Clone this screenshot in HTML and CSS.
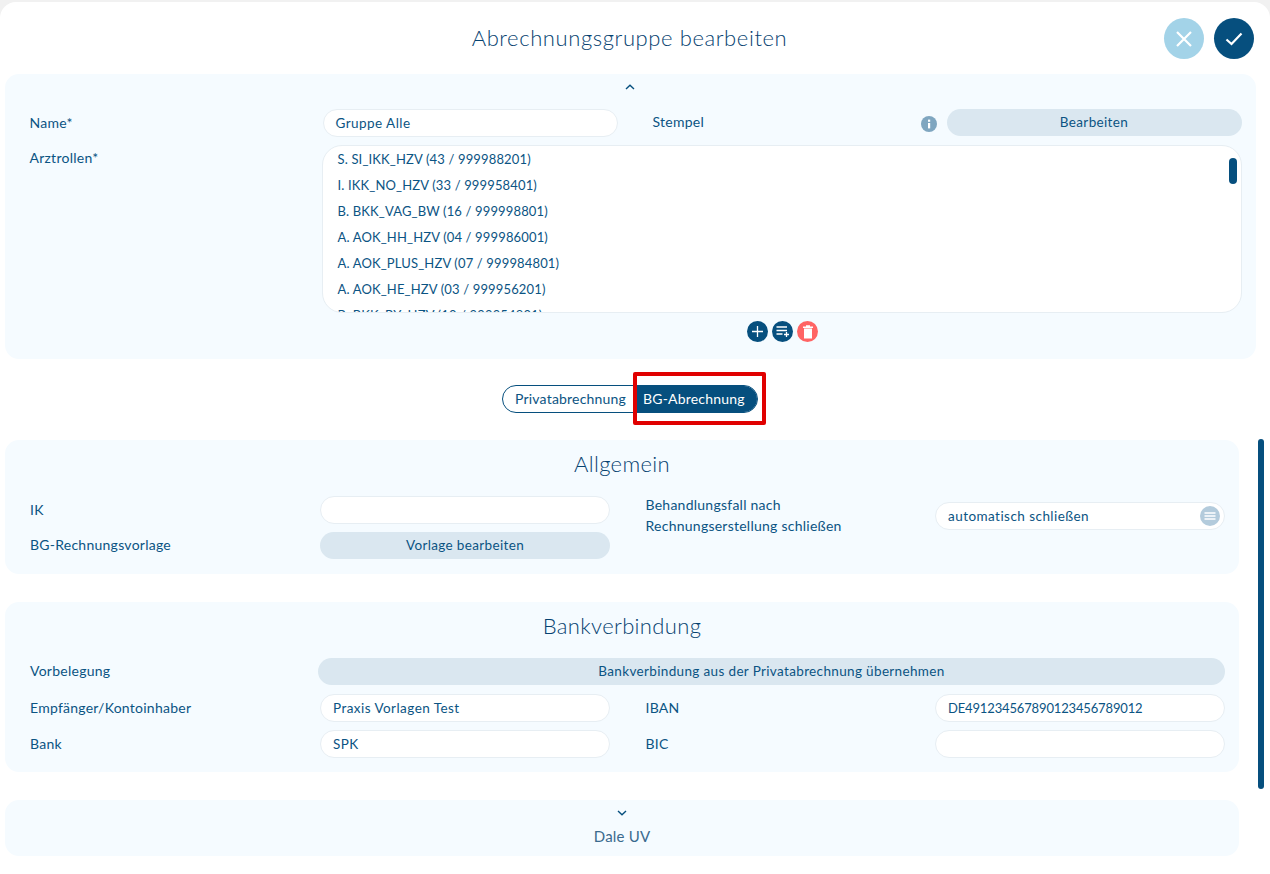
FILE: index.html
```html
<!DOCTYPE html>
<html lang="de">
<head>
<meta charset="utf-8">
<title>Abrechnungsgruppe bearbeiten</title>
<link rel="stylesheet" href="styles.css">
</head>
<body>
<div class="dialog">
  <header class="head">
    <h1 class="title">Abrechnungsgruppe bearbeiten</h1>
    <div class="head-actions">
      <button class="round cancel"><svg width="18" height="18" viewBox="0 0 18 18"><path d="M2 2L16 16M16 2L2 16" stroke="#fff" stroke-width="2.2" fill="none"/></svg></button>
      <button class="round ok"><svg width="18" height="14" viewBox="0 0 18 14"><path d="M1.5 7.5L6.5 12L16.5 1.5" stroke="#fff" stroke-width="2.2" fill="none"/></svg></button>
    </div>
  </header>

  <section class="card top-card">
    <div class="chev-row"><svg width="10" height="6" viewBox="0 0 10 6"><path d="M1 5L5 1.2L9 5" stroke="#064f7e" stroke-width="1.4" fill="none"/></svg></div>
    <div class="name-row">
      <label class="lbl name-lbl">Name*</label>
      <div class="field name-field">Gruppe Alle</div>
      <label class="lbl stempel">Stempel</label>
      <svg class="info" width="16" height="16" viewBox="0 0 16 16"><circle cx="8" cy="8" r="8" fill="#7fa6c0"/><rect x="7" y="7" width="2.2" height="5.4" fill="#fff"/><rect x="7" y="3.6" width="2.2" height="2.2" fill="#fff"/></svg>
      <button class="pill stempel-btn">Bearbeiten</button>
    </div>
    <div class="roles-row">
      <label class="lbl roles-lbl">Arztrollen*</label>
      <div class="listbox">
        <div class="opt">S. SI_IKK_HZV (43 / 999988201)</div>
        <div class="opt">I. IKK_NO_HZV (33 / 999958401)</div>
        <div class="opt">B. BKK_VAG_BW (16 / 999998801)</div>
        <div class="opt">A. AOK_HH_HZV (04 / 999986001)</div>
        <div class="opt">A. AOK_PLUS_HZV (07 / 999984801)</div>
        <div class="opt">A. AOK_HE_HZV (03 / 999956201)</div>
        <div class="opt">B. BKK_BY_HZV (10 / 999954801)</div>
        <div class="list-thumb"></div>
      </div>
    </div>
    <div class="tools">
      <span class="tool navy"><svg width="11" height="11" viewBox="0 0 11 11"><path d="M5.5 0V11M0 5.5H11" stroke="#fff" stroke-width="1.3"/></svg></span>
      <span class="tool navy"><svg width="14" height="11" viewBox="0 0 14 11"><path d="M0.5 1H11M0.5 4.5H11M0.5 8H6.5M10.5 6V11M8 8.5H13" stroke="#fff" stroke-width="1.3" fill="none"/></svg></span>
      <span class="tool red"><svg width="10" height="14" viewBox="0 0 10 14"><path d="M0 1.6H10V3H0ZM3 0.3H7V1.6H3ZM1 3.6H9V13.6H1Z" fill="#fff"/></svg></span>
    </div>
  </section>

  <div class="toggle-row">
    <div class="toggle">
      <span class="seg">Privatabrechnung</span>
      <span class="seg active">BG-Abrechnung</span>
    </div>
    <div class="highlight"></div>
  </div>

  <div class="scroll">
    <section class="card sec sec-general">
      <h2 class="sec-title">Allgemein</h2>
      <div class="general-grid">
        <label class="lbl ik-lbl">IK</label>
        <div class="field ik-field"></div>
        <label class="lbl two-line">Behandlungsfall nach<br>Rechnungserstellung schließen</label>
        <div class="field select">automatisch schließen
          <svg class="menu-ic" width="20" height="20" viewBox="0 0 20 20"><circle cx="10" cy="10" r="10" fill="#b3cbdc"/><path d="M4.5 7H15.5M4.5 10H15.5M4.5 13H15.5" stroke="#fff" stroke-width="1.4"/></svg>
        </div>
        <label class="lbl up1">BG-Rechnungsvorlage</label>
        <button class="pill">Vorlage bearbeiten</button>
      </div>
    </section>

    <section class="card sec sec-bank">
      <h2 class="sec-title">Bankverbindung</h2>
      <div class="bank-grid">
        <label class="lbl up2">Vorbelegung</label>
        <button class="pill wide">Bankverbindung aus der Privatabrechnung übernehmen</button>
        <label class="lbl">Empfänger/Kontoinhaber</label>
        <div class="field">Praxis Vorlagen Test</div>
        <label class="lbl col3">IBAN</label>
        <div class="field iban">DE491234567890123456789012</div>
        <label class="lbl">Bank</label>
        <div class="field">SPK</div>
        <label class="lbl col3">BIC</label>
        <div class="field"></div>
      </div>
    </section>

    <section class="card sec sec-dale">
      <svg width="10" height="6" viewBox="0 0 10 6"><path d="M1 1L5 4.8L9 1" stroke="#064f7e" stroke-width="1.4" fill="none"/></svg>
      <div class="dale">Dale UV</div>
    </section>

    <div class="scroll-thumb"></div>
  </div>
</div>
</body>
</html>
```

FILE: styles.css
```css
* { box-sizing: border-box; }
html, body { margin: 0; height: 874px; overflow: hidden; }
body {
  background: #f1f1f1;
  font-family: "Lato", "Open Sans", sans-serif;
  color: #0b5483;
  font-size: 14px;
}
.dialog {
  margin-top: 2px;
  height: 872px;
  background: #fff;
  border-radius: 16px 16px 0 0;
  display: flex;
  flex-direction: column;
}
.head {
  height: 72px;
  position: relative;
  display: flex;
  justify-content: center;
  padding-top: 22px;
  padding-right: 11px;
}
.title { margin: 0; font-weight: 300; font-size: 22px; line-height: 28px; letter-spacing: 0.6px; color: #064270; }
.head-actions { position: absolute; top: 16px; left: 1164px; display: flex; gap: 10px; }
.round {
  width: 40px; height: 41px; border-radius: 50%; border: 0; padding: 0;
  display: flex; align-items: center; justify-content: center;
}
.cancel { background: #a3d3e8; }
.ok { background: #064f7e; }
.card { background: #f5fbff; border-radius: 14px; margin-left: 5px; }
.top-card { width: 1251px; height: 285px; padding: 0 14px 0 25px; flex: none; }
.chev-row { height: 35px; display: flex; justify-content: center; padding-top: 10px; margin: 0 -14px 0 -25px; align-items: flex-start; padding-right: 2px; }
.lbl { font-size: 14px; line-height: 20px; letter-spacing: 0.25px; }
.name-row { display: flex; align-items: flex-start; height: 28px; }
.name-row > .lbl { margin-top: 3px; }
.name-row > .name-lbl { width: 293px; margin-top: 4px; margin-left: -0.5px; flex: none; }
.field {
  height: 28px; background: #fff; border: 1px solid #e7eef3; border-radius: 14px;
  padding: 0 12px; line-height: 26px; font-size: 13.5px; letter-spacing: 0.45px;
  position: relative;
}
.name-field { width: 295px; }
.stempel { margin-left: 35px; width: 268px; }
.info { flex: none; margin-top: 7px; }
.pill {
  height: 27px; border: 0; border-radius: 14px; background: #dae7f0; color: #0b5483;
  font-family: inherit; font-size: 13.5px; letter-spacing: 0.35px; padding: 0 0 2px;
}
.stempel-btn { width: 295px; margin-left: 10px; }
.roles-row { display: flex; margin-top: 8px; }
.roles-lbl { width: 292px; padding-top: 3px; margin-left: -0.5px; }
.listbox {
  width: 920px; height: 168px; background: #fff; border: 1px solid #e7eef3;
  border-radius: 20px; overflow: hidden; position: relative; padding-left: 15px;
}
.opt { height: 26px; line-height: 26px; font-size: 13px; letter-spacing: 0.15px; white-space: nowrap; }
.list-thumb { position: absolute; top: 12px; right: 4px; width: 8px; height: 26px; border-radius: 4px; background: #064f7e; }
.tools { display: flex; justify-content: flex-start; gap: 4px; padding-left: 717px; margin-top: 8px; }
.tool { width: 21px; height: 21px; border-radius: 50%; display: flex; align-items: center; justify-content: center; }
.navy { background: #064f7e; }
.red { background: #ff6464; }
.toggle-row { height: 80px; flex: none; position: relative; padding: 26px 0 0 502px; }
.toggle { display: flex; width: 256px; height: 28px; border: 1px solid #064f7e; border-radius: 14px; overflow: hidden; }
.seg { line-height: 26px; font-size: 14px; letter-spacing: 0.2px; padding-left: 12px; width: 130px; flex: none; }
.seg.active { background: #064f7e; color: #fff; width: 126px; padding-left: 10px; }
.highlight { position: absolute; left: 633px; top: 13px; width: 133px; height: 53px; border: 4px solid #e00000; border-radius: 2px; }
.scroll { position: relative; flex: 1; overflow: hidden; padding-top: 1px; }
.sec { width: 1234px; padding: 0 14px 0 25px; margin-bottom: 28px; }
.sec-title { margin: 0 -14px 0 -25px; font-weight: 300; font-size: 22px; line-height: 30px; text-align: center; letter-spacing: 0.35px; color: #064270; }
.sec-general { height: 134px; padding-top: 9px; }
.general-grid {
  display: grid; grid-template-columns: 290px 290px 325px 290px;
  grid-template-rows: 36px 27px; margin-top: 17px; align-items: center;
}
.ik-lbl { margin-bottom: 8px; }
.ik-field { align-self: start; }
.up1 { margin-bottom: 2px; }
.up2 { align-self: start; margin-top: 3px; }
.two-line { grid-column: 3; grid-row: 1 / span 2; padding-left: 35.5px; align-self: start; line-height: 21px; margin-top: -2px; }
.select { grid-column: 4; grid-row: 1; align-self: start; margin-top: 6px; }
.menu-ic { position: absolute; right: 4px; top: 3px; }
.sec-bank { height: 170px; padding-top: 9px; }
.bank-grid {
  display: grid; margin-top: 17px;
  grid-template-columns: 290px 290px 325px 290px; grid-template-rows: 28px 28px 28px; row-gap: 8px; align-items: center;
}
.wide { grid-column: 2 / span 3; margin-left: -2px; align-self: start; }
.col3 { padding-left: 35.5px; }
.iban { font-size: 13px; letter-spacing: -0.15px; }
.sec-dale { height: 56px; display: flex; flex-direction: column; align-items: center; padding: 10px 0 0; margin-bottom: 0; }
.dale { font-size: 15px; line-height: 20px; margin-top: 10px; letter-spacing: 0.2px; color: #3a6a8e; }
.scroll-thumb { position: absolute; left: 1258px; top: 0; width: 6px; height: 350px; border-radius: 3px; background: #064f7e; }
```
